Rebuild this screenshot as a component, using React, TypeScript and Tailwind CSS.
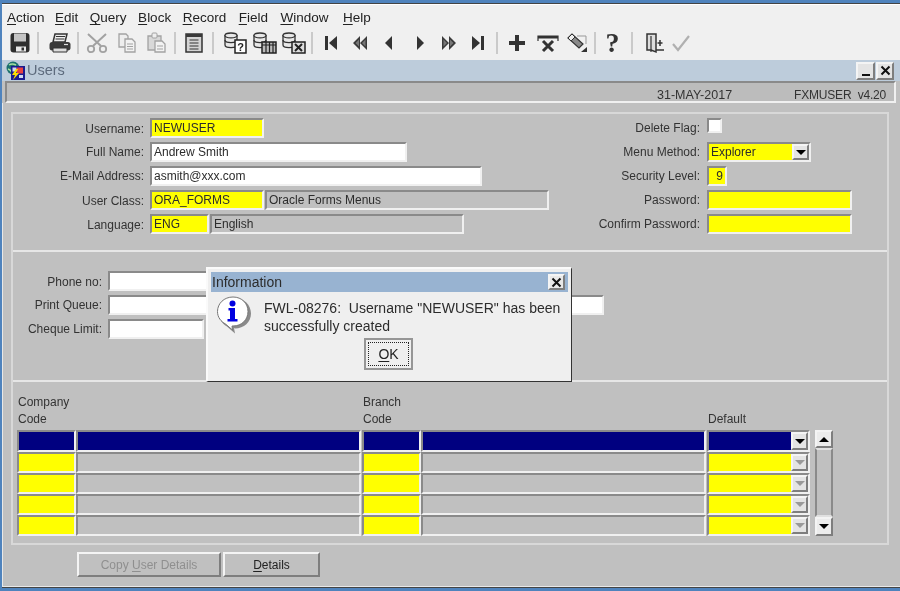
import type { ReactNode } from 'react'

const sunken = 'border-2 border-t-[#8a8a8a] border-l-[#8a8a8a] border-r-[#f0f0f0] border-b-[#f0f0f0]'
const raised = 'border-2 border-t-[#f4f4f4] border-l-[#f4f4f4] border-r-[#7e7e7e] border-b-[#7e7e7e]'

function Mn({ children }: { children: ReactNode }) {
  return <span className="underline underline-offset-2">{children}</span>
}

function Arrow({ dim }: { dim?: boolean }) {
  return <div className={`w-0 h-0 border-x-[5px] border-x-transparent border-t-[5px] ${dim ? 'border-t-[#9a9a9a]' : 'border-t-black'}`} />
}

function Field({ className, children }: { className: string; children?: ReactNode }) {
  return <div className={`${sunken} h-5 flex items-center pl-[2px] text-[12px] leading-none text-[#2c2c2c] ${className}`}>{children}</div>
}

function Combo({ className, bar, dim, children }: { className: string; bar: string; dim?: boolean; children?: ReactNode }) {
  return (
    <div className={`${sunken} flex items-stretch text-[12px] text-[#2c2c2c] ${className}`}>
      <div className={`flex-1 flex items-center pl-[2px] ${bar}`}>{children}</div>
      <div className={`${raised} w-[17px] bg-[#e4e4e4] flex items-center justify-center`}>
        <Arrow dim={dim} />
      </div>
    </div>
  )
}

function Label({ className, children }: { className: string; children: ReactNode }) {
  return <div className={`text-right text-[12px] h-5 leading-5 text-[#333] ${className}`}>{children}</div>
}

function Tool({ children, className = '' }: { children: ReactNode; className?: string }) {
  return <div className={`w-[29px] h-[24px] flex items-center justify-center shrink-0 ${className}`}><svg width="24" height="24" viewBox="0 0 24 24">{children}</svg></div>
}

function Sep({ className }: { className: string }) {
  return <div className={`w-[2px] h-[22px] bg-[#cacaca] shrink-0 ${className}`} />
}

function Cylinder({ x = 1, y = 2 }: { x?: number; y?: number }) {
  return (
    <g stroke="#333" strokeWidth="1.3" fill="#e8e8e8">
      <path d={`M${x} ${y + 2}v10c0 1.6 3 2.6 6 2.6s6-1 6-2.6v-10`} />
      <ellipse cx={x + 6} cy={y + 2.4} rx="6" ry="2.4" />
      <path d={`M${x} ${y + 7}c0 1.6 3 2.6 6 2.6s6-1 6-2.6`} fill="none" />
    </g>
  )
}

function MainToolbar() {
  const d = '#333'
  const g = '#a2a2a2'
  return (
    <div className="h-[30px] flex items-center pl-[3px] pb-[4px]">
      <Tool>
        <rect x="2.5" y="2" width="19" height="19.5" rx="3" fill="#2e2e2e" />
        <rect x="6" y="2.5" width="12" height="8" fill="#c4c4c4" />
        <rect x="8" y="15.5" width="10" height="5" fill="#e8e8e8" />
        <rect x="13.5" y="16.5" width="2.5" height="3" fill="#2e2e2e" />
      </Tool>
      <Sep className="ml-[3px] mr-[6px]" />
      <Tool>
        <path d="M7 3h12l-2 8H5z" fill="#eee" stroke={d} strokeWidth="1.5" />
        <path d="M8 5.5h9M7.5 8h9" stroke={d} strokeWidth="1" />
        <path d="M4 11h16c1.5 0 2.5 1 2.5 2.5V17c0 1.5-1 2.5-2.5 2.5H4c-1.5 0-2.5-1-2.5-2.5v-3C1.500 12 2.500 11 4 11z" fill="#3a3a3a" />
        <path d="M5 17h14v4H5z" fill="#ddd" stroke={d} strokeWidth="1" />
        <path d="M16 13.500h4" stroke="#ddd" strokeWidth="1.2" />
      </Tool>
      <Sep className="ml-[3px] mr-[3px]" />
      <Tool>
        <path d="M21 3 8 15M3 3l13 12" stroke={g} strokeWidth="2" fill="none" />
        <circle cx="6" cy="18" r="3.2" stroke={g} strokeWidth="1.8" fill="none" />
        <circle cx="18" cy="18" r="3.2" stroke={g} strokeWidth="1.8" fill="none" />
      </Tool>
      <Tool className="ml-[1px]">
        <path d="M4 3h7l2 2v11H4z" fill="#eee" stroke={g} strokeWidth="1.3" />
        <path d="M10 8h7l3 3v10H10z" fill="#f2f2f2" stroke={g} strokeWidth="1.3" />
        <path d="M12 13h6M12 15.500h6M12 18h6" stroke={g} />
      </Tool>
      <Tool className="ml-[1px]">
        <path d="M3 5h13v14H3z" fill="#d8d8d8" stroke={g} strokeWidth="1.3" />
        <rect x="7" y="2" width="5" height="5" rx="1" fill="#eee" stroke={g} />
        <path d="M10 10h7l3 3v8H10z" fill="#f2f2f2" stroke={g} strokeWidth="1.3" />
        <path d="M12 15h6M12 18h6" stroke={g} />
      </Tool>
      <Sep className="ml-[3px] mr-[3px]" />
      <Tool>
        <rect x="4" y="3" width="16" height="18" fill="#d4d4d4" stroke={d} strokeWidth="1.5" />
        <rect x="4" y="3" width="16" height="3" fill="#3a3a3a" />
        <path d="M7.500 9h9M7.500 12h9M7.500 15h9M7.500 18h9" stroke={d} strokeWidth="1.2" />
      </Tool>
      <Sep className="ml-[4px] mr-[7px]" />
      <Tool>
        <Cylinder />
        <rect x="11" y="9" width="11" height="13" fill="#fff" stroke="#222" strokeWidth="1.5" />
        <text x="16.500" y="20" textAnchor="middle" fontSize="11" fontWeight="700" fontFamily="Liberation Sans, sans-serif" fill="#222">?</text>
      </Tool>
      <Tool>
        <Cylinder />
        <rect x="9" y="11" width="14" height="11" fill="#bbb" stroke="#222" strokeWidth="1.5" />
        <path d="M9 14h14M13 11v11M16.500 11v11M20 11v11" stroke="#222" strokeWidth="1.2" />
      </Tool>
      <Tool>
        <Cylinder />
        <rect x="10" y="11" width="13" height="11" fill="#ddd" stroke="#222" strokeWidth="1.5" />
        <path d="m13 13 7 7m0-7-7 7" stroke="#222" strokeWidth="2" />
      </Tool>
      <Sep className="ml-[3px] mr-[3px]" />
      <Tool>
        <rect x="6" y="5" width="3" height="14" fill={d} />
        <path d="M18 5v14l-8-7z" fill={d} />
      </Tool>
      <Tool>
        <path d="M12 5v14l-7-7zM19 5v14l-7-7z" fill="#3a3a3a" />
        <path d="M11 8.500v7l-3.500-3.500zM17.500 8.500v7L14 12z" fill="#777" />
      </Tool>
      <Tool>
        <path d="M15 5v14l-7-7z" fill={d} />
      </Tool>
      <Tool className="ml-[2px]">
        <path d="M9 5v14l7-7z" fill={d} />
      </Tool>
      <Tool>
        <path d="M5 5v14l7-7zM12 5v14l7-7z" fill="#3a3a3a" />
        <path d="M6.500 8.500v7l3.500-3.500zM13 8.500v7l3.500-3.500z" fill="#777" />
      </Tool>
      <Tool>
        <path d="M6 5v14l8-7z" fill={d} />
        <rect x="15" y="5" width="3" height="14" fill={d} />
      </Tool>
      <Sep className="ml-[4px] mr-[4px]" />
      <Tool>
        <path d="M10 4h4v6h6v4h-6v6h-4v-6H4v-4h6z" fill={d} />
      </Tool>
      <Tool className="ml-[2px]">
        <path d="M2 5h20v2H2zM2 5v5M22 5v5" stroke={d} strokeWidth="1.2" fill={d} />
        <path d="m7 10 10 10m0-10L7 20" stroke={d} strokeWidth="3" />
      </Tool>
      <Tool>
        <path d="m3 7 4-4 11 10-4 4z" fill="#8a8a8a" stroke={d} strokeWidth="1.2" />
        <path d="m3 7 4-4 3 3-4 4z" fill="#eee" stroke={d} strokeWidth="1" />
        <path d="M12 5h9v8" stroke="#999" fill="none" />
        <path d="M22 16v5h-6z" fill={d} />
      </Tool>
      <Sep className="ml-[3px] mr-[2px]" />
      <div className="w-[29px] h-[24px] shrink-0 text-center text-[28px] leading-[24px] font-bold text-[#333]" style={{ fontFamily: '"Liberation Serif", serif' }}>?</div>
      <Sep className="ml-[4px] mr-[7px]" />
      <Tool>
        <path d="M4 3h9v18l-5-2H4z" fill="#ddd" stroke={d} strokeWidth="1.5" />
        <path d="M8 5v16" stroke={d} strokeWidth="1.2" />
        <path d="M13 19h8M17 9v6M14.500 12h5" stroke={d} strokeWidth="1.5" fill="none" />
      </Tool>
      <Tool className="-ml-[3px]">
        <path d="m4 13 5 6L20 5" stroke="#b0b0b0" strokeWidth="2.2" fill="none" />
      </Tool>
    </div>
  )
}

function TopSection() {
  return (
    <div className="h-[136px] flex pt-[4px]">
      <div className="w-[634px] flex flex-col gap-1">
        <div className="flex gap-[6px]">
          <Label className="w-[131px] pt-[1px]">Username:</Label>
          <Field className="w-[114px] bg-[#ffff00]">NEWUSER</Field>
        </div>
        <div className="flex gap-[6px]">
          <Label className="w-[131px]">Full Name:</Label>
          <Field className="w-[257px] bg-white">Andrew Smith</Field>
        </div>
        <div className="flex gap-[6px]">
          <Label className="w-[131px]">E-Mail Address:</Label>
          <Field className="w-[332px] bg-white">asmith@xxx.com</Field>
        </div>
        <div className="flex gap-[6px]">
          <Label className="w-[131px] pt-[1px]">User Class:</Label>
          <Field className="w-[114px] bg-[#ffff00]">ORA_FORMS</Field>
          <Field className="w-[284px] -ml-[5px] bg-[#c0c0c0]">Oracle Forms Menus</Field>
        </div>
        <div className="flex gap-[6px]">
          <Label className="w-[131px] pt-[1px]">Language:</Label>
          <Field className="w-[59px] bg-[#ffff00]">ENG</Field>
          <Field className="w-[254px] -ml-[5px] bg-[#c0c0c0]">English</Field>
        </div>
      </div>
      <div className="flex flex-col gap-1">
        <div className="flex gap-[7px]">
          <Label className="w-[53px] whitespace-nowrap flex justify-end">Delete Flag:</Label>
          <div className={`${sunken} w-[15px] h-[15px] bg-white`} />
        </div>
        <div className="flex gap-[7px]">
          <Label className="w-[53px] whitespace-nowrap flex justify-end">Menu Method:</Label>
          <Combo className="w-[104px] h-5" bar="bg-[#ffff00]">Explorer</Combo>
        </div>
        <div className="flex gap-[7px]">
          <Label className="w-[53px] whitespace-nowrap flex justify-end">Security Level:</Label>
          <Field className="w-[20px] justify-end pr-[2px] bg-[#ffff00]">9</Field>
        </div>
        <div className="flex gap-[7px]">
          <Label className="w-[53px] whitespace-nowrap flex justify-end">Password:</Label>
          <Field className="w-[145px] bg-[#ffff00]" />
        </div>
        <div className="flex gap-[7px]">
          <Label className="w-[53px] whitespace-nowrap flex justify-end">Confirm Password:</Label>
          <Field className="w-[145px] bg-[#ffff00]" />
        </div>
      </div>
    </div>
  )
}

function MiddleSection() {
  return (
    <div className="h-[130px] border-t-2 border-[#e6e6e6] pt-[19px] flex flex-col gap-1">
      <div className="flex gap-[6px]">
        <Label className="w-[89px] pt-[1px]">Phone no:</Label>
        <Field className="w-[240px] bg-white" />
      </div>
      <div className="flex gap-[6px]">
        <Label className="w-[89px]">Print Queue:</Label>
        <Field className="w-[496px] bg-white" />
      </div>
      <div className="flex gap-[6px]">
        <Label className="w-[89px]">Cheque Limit:</Label>
        <Field className="w-[96px] bg-white" />
      </div>
    </div>
  )
}

function GridRow({ selected }: { selected?: boolean }) {
  const key = selected ? 'bg-[#000080]' : 'bg-[#ffff00]'
  const desc = selected ? 'bg-[#000080]' : 'bg-[#c0c0c0]'
  return (
    <div className={`flex ${selected ? 'h-[22px]' : 'h-[21px]'}`}>
      <div className={`${sunken} w-[59px] ${key}`} />
      <div className={`${sunken} w-[285px] ${desc}`} />
      <div className={`${sunken} w-[59px] ml-[1px] ${key}`} />
      <div className={`${sunken} w-[285px] ${desc}`} />
      <Combo className="w-[103px] ml-[1px]" bar={key} dim={!selected} />
    </div>
  )
}

function BottomSection() {
  return (
    <div className="h-[163px] border-t-2 border-[#e6e6e6] pt-[12px] pl-[4px]">
      <div className="h-[36px] pl-[1px] text-[12px] leading-[17px] text-[#333]">
        <div className="grid grid-cols-[345px_345px_auto]">
          <div>Company<br />Code</div>
          <div>Branch<br />Code</div>
          <div className="pt-[17px]">Default</div>
        </div>
      </div>
      <div className="flex">
        <div className="flex flex-col">
          <GridRow selected />
          <GridRow />
          <GridRow />
          <GridRow />
          <GridRow />
        </div>
        <div className="w-[18px] ml-[5px] flex flex-col">
          <div className={`${raised} h-[18px] bg-[#ececec] flex items-center justify-center`}>
            <div className="w-0 h-0 border-x-[5px] border-x-transparent border-b-[5px] border-b-black" />
          </div>
          <div className="h-[69px] bg-[#c0c0c0] border-2 border-[#e0e0e0] border-l-[#8a8a8a] border-r-[#8a8a8a]" />
          <div className={`${raised} h-[19px] bg-[#ececec] flex items-center justify-center`}>
            <Arrow />
          </div>
        </div>
      </div>
    </div>
  )
}

function InfoDialog() {
  return (
    <div className="absolute left-[206px] top-[267px] w-[366px] h-[115px] bg-[#efefef] border-t-2 border-l-2 border-r-[1.500px] border-b-[1.500px] border-t-[#fafafa] border-l-[#fafafa] border-r-[#333] border-b-[#333] p-[3px]">
      <div className="h-5 bg-[#98b3d1] flex items-center justify-between pl-[1px] pr-[3px] text-[14px] text-[#2c2c2c]">
        <span>Information</span>
        <div className={`${raised} w-[17px] h-[16px] bg-[#e8e8e8] flex items-center justify-center`}>
          <svg width="11" height="11" viewBox="0 0 11 11"><path d="m1.500 1.500 8 8m0-8-8 8" stroke="#111" strokeWidth="2" /></svg>
        </div>
      </div>
      <div className="flex">
        <div className="w-[53px] pl-[4px] pt-[3px] shrink-0">
          <svg width="38" height="40" viewBox="0 0 38 40">
            <path d="M20 33.500c9 0 16-6.500 16-15S29 3 20 3 4 9.500 4 18.500c0 6 3.500 10.500 8 13l8 7-1-5.500z" fill="#8a8a8a" />
            <path d="M18 31c9 0 15-6.500 15-14.500S27 2 18 2 2.500 8.500 2.500 16.500c0 6 3.500 10 8 12.500l7 6-.500-4z" fill="#fff" stroke="#777" strokeWidth="1" />
            <circle cx="17.500" cy="8.500" r="3" fill="#0000e0" />
            <path d="M13.500 13h6.500v11h2.500v2.500H12.500V24H15v-8.500h-1.500z" fill="#0000e0" />
          </svg>
        </div>
        <div className="flex-1 pt-[7px]">
          <div className="text-[14px] leading-[18px] text-[#2c2c2c] whitespace-pre">{'FWL-08276:  Username "NEWUSER" has been\nsuccessfully created'}</div>
          <div className="border-2 border-[#969696] ml-[100px] mt-[3px] w-[49px] h-[32px] p-[2px]">
            <div className="w-full h-full border border-dotted border-[#222] flex items-center justify-center text-[14px] text-[#222]">
              <span><Mn>O</Mn>K</span>
            </div>
          </div>
        </div>
      </div>
    </div>
  )
}

export default function App() {
  const menus = [
    { k: 'A', rest: 'ction', cls: '' },
    { k: 'E', rest: 'dit', cls: '-ml-[1px]' },
    { k: 'Q', rest: 'uery', cls: '' },
    { k: 'B', rest: 'lock', cls: '' },
    { k: 'R', rest: 'ecord', cls: '' },
    { k: 'F', rest: 'ield', cls: 'ml-[1px]' },
    { k: 'W', rest: 'indow', cls: 'ml-[1px]' },
    { k: 'H', rest: 'elp', cls: 'ml-[3px]' },
  ]

  return (
    <div className="relative w-[900px] h-[591px] overflow-hidden bg-[#4f83bd] pl-[2px] pt-[3px] pb-[3px] blur-[0.5px]" style={{ fontFamily: '"Liberation Sans", Arial, sans-serif' }}>
      <div className="h-full flex flex-col border-t border-b border-[#444] bg-[#c0c0c0]">
        {/* menu + toolbar */}
        <div className="bg-[#f0f0f0] border-t border-white">
          <div className="h-[25px] flex items-center gap-[11.500px] pl-[5px] pt-[2px] text-[13.500px] text-[#222]">
            {menus.map((m) => (
              <span key={m.k} className={m.cls}><Mn>{m.k}</Mn>{m.rest}</span>
            ))}
          </div>
          <MainToolbar />
        </div>

        {/* window title */}
        <div className="h-[21px] bg-[#bdccdb] flex items-center justify-between pl-[4px] pr-[6px]">
          <div className="flex items-center">
            <svg width="20" height="20" viewBox="0 0 20 20">
              <circle cx="7" cy="7" r="6.500" fill="#1d6f6f" />
              <path d="M3 4c3-2 5-1 7 0M2 8c3 1 4 3 4 5" stroke="#a8e0a0" strokeWidth="1.500" fill="none" />
              <rect x="5" y="5" width="14" height="14" fill="#1a1a90" />
              <rect x="11" y="6.500" width="6" height="6" fill="#e84040" />
              <rect x="6.500" y="6.500" width="4" height="4" fill="#d0d8f0" />
              <path d="m10 8-4 6h3l-2 5 6-7h-3l2-4z" fill="#ffe000" />
              <rect x="13" y="14" width="4" height="3" fill="#d0d8f0" />
            </svg>
            <span className="text-[14.500px] text-[#5d6b7d] ml-[1px]">Users</span>
          </div>
          <div className="flex gap-[1px]">
            <div className={`${raised} w-[19px] h-[18px] bg-[#e4e4e4] flex items-end justify-center pb-[2px]`}>
              <div className="w-[8px] h-[2px] bg-[#111]" />
            </div>
            <div className={`${raised} w-[18px] h-[18px] bg-[#e4e4e4] flex items-center justify-center`}>
              <svg width="11" height="11" viewBox="0 0 11 11"><path d="m1.500 1.500 8 8m0-8-8 8" stroke="#111" strokeWidth="2" /></svg>
            </div>
          </div>
        </div>

        {/* status strip */}
        <div className={`${sunken} ml-[3px] mr-[4px] h-[22px] bg-[#bcbcbc] flex items-start justify-end pt-[5px] gap-[62px] pr-[8px] text-[12px] leading-[14px] text-[#333]`}>
          <span className="text-[12.500px]">31-MAY-2017</span>
          <span className="whitespace-pre tracking-[-0.200px]">FXMUSER  v4.20</span>
        </div>

        {/* form */}
        <div className="flex-1 pl-[9px] pt-[9px] border-l border-b border-[#e8e8e8]">
          <div className="-ml-[1px] w-[878px] h-[433px] border-2 border-[#d8d8d8]">
            <TopSection />
            <MiddleSection />
            <BottomSection />
          </div>
          <div className="flex gap-[2px] pl-[65px] pt-[7px]">
            <div className={`${raised} w-[144px] h-[25px] bg-[#c0c0c0] flex items-center justify-center text-[12px] text-[#8f8f8f]`}>
              <span>Copy <Mn>U</Mn>ser Details</span>
            </div>
            <div className={`${raised} w-[97px] h-[25px] bg-[#c0c0c0] flex items-center justify-center text-[12px] text-[#222]`}>
              <span><Mn>D</Mn>etails</span>
            </div>
          </div>
        </div>
      </div>

      <InfoDialog />
    </div>
  )
}
